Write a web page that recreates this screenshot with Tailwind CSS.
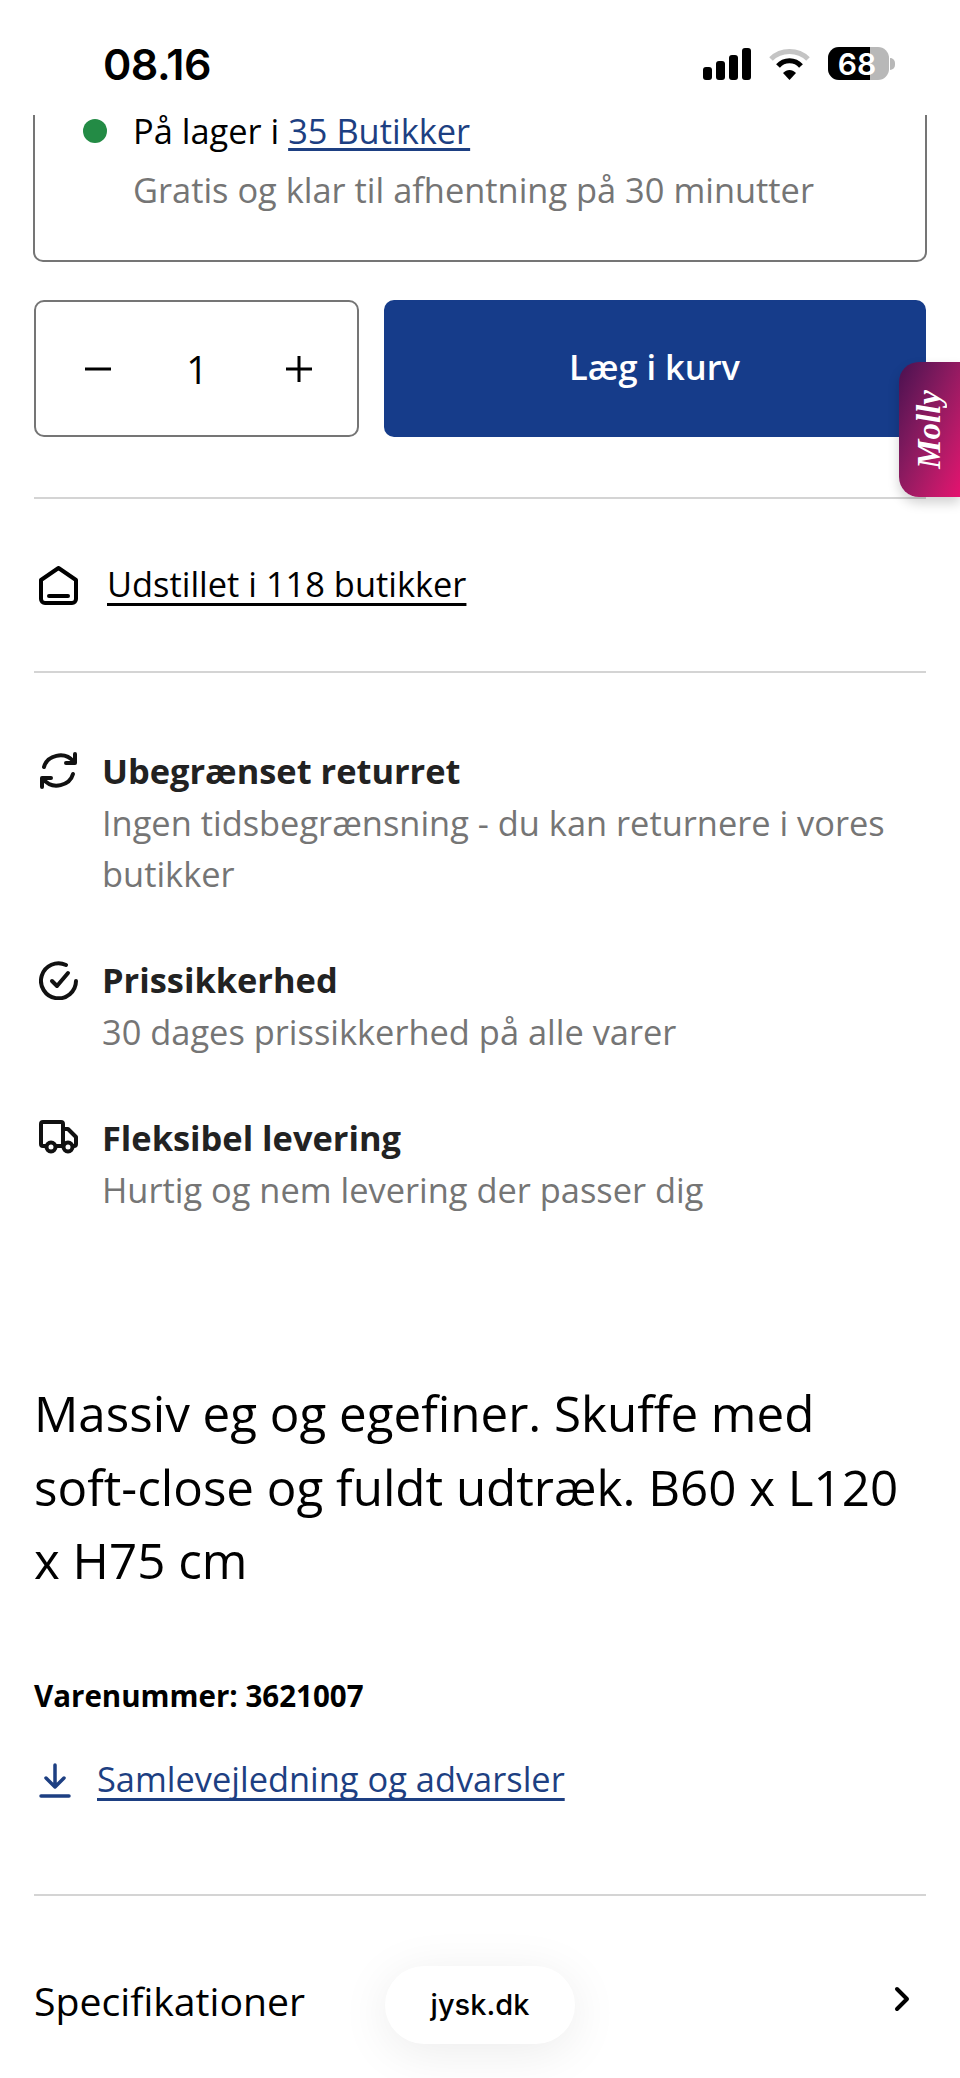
<!DOCTYPE html>
<html lang="da">
  <head>
    <meta charset="UTF-8" />
    <meta name="viewport" content="width=device-width, initial-scale=1.0" />
    <title>JYSK</title>
    <script src="https://cdn.jsdelivr.net/npm/@tailwindcss/browser@4"></script>
  </head>
  <body class="bg-white">
    <div class="relative w-[960px] h-[2078px] overflow-hidden bg-white font-['Open_Sans',sans-serif] text-black">
      <!-- status bar, page scrolls under it -->
      <div class="absolute top-0 left-0 z-10 w-full h-[115px] bg-white flex items-start justify-between pl-[103px] pr-[65px] pt-[47px]">
        <div class="font-['Inter',sans-serif] font-semibold text-[43px] leading-[34px] tracking-[-0.5px]">08.16</div>
        <div class="flex items-center gap-[18px] mt-0">
          <svg width="48" height="33" viewBox="0 0 48 33" fill="#000">
            <rect x="0" y="20" width="9" height="13" rx="3" />
            <rect x="13" y="14" width="9" height="19" rx="3" />
            <rect x="26" y="8" width="9" height="25" rx="3" />
            <rect x="39" y="1" width="9" height="32" rx="3" />
          </svg>
          <svg width="41" height="32" viewBox="0 0 41 32" fill="none">
            <path d="M2 11 C12 1 29 1 39 11" stroke="#c4c4c4" stroke-width="5" />
            <path d="M9 18 C15 11 26 11 32 18" stroke="#000" stroke-width="5" />
            <path d="M14 25 L20.5 32 L27 25 C23 21 18 21 14 25 Z" fill="#000" />
          </svg>
          <div class="flex items-center">
            <div class="relative w-[61px] h-[33px] rounded-[11px] overflow-hidden bg-[#b8b8b8]">
              <div class="absolute left-0 top-0 h-full w-[42px] bg-black"></div>
              <div class="absolute inset-0 flex items-center justify-center font-['Inter',sans-serif] font-semibold text-[30px] leading-none text-white pr-[3px]">68</div>
            </div>
            <div class="w-[5px] h-[12px] ml-[1px] rounded-r-full bg-[#b8b8b8]"></div>
          </div>
        </div>
      </div>

      <main class="pt-[100px]">
        <!-- stock card -->
        <div class="mx-[33px] h-[162px] border-2 border-t-0 border-[#757575] rounded-b-[10px] pt-[9px] pl-[48px]">
          <div class="flex items-center gap-[26px] text-[34.4px] leading-[44px]">
            <span class="w-[24px] h-[24px] rounded-full bg-[#238b45]"></span>
            <span>På lager i <a class="text-[#1d3f82] underline underline-offset-4">35 Butikker</a></span>
          </div>
          <div class="mt-[15px] pl-[50px] text-[34.4px] leading-[44px] text-[#757575]">Gratis og klar til afhentning på 30 minutter</div>
        </div>

        <div class="px-[34px]">
          <!-- quantity + add to cart -->
          <div class="mt-[38px] flex gap-[25px] h-[137px]">
            <div class="w-[325px] border-2 border-[#757575] rounded-[10px] flex items-center justify-between pl-[48px] pr-[44px]">
              <svg width="28" height="28" viewBox="0 0 28 28" stroke="#000" stroke-width="3"><path d="M1 14H27" /></svg>
              <span class="text-[38px] leading-none -ml-[3px]">1</span>
              <svg width="28" height="28" viewBox="0 0 28 28" stroke="#000" stroke-width="3"><path d="M1 14H27M14 1V27" /></svg>
            </div>
            <button class="flex-1 rounded-[10px] bg-[#163c8a] text-white font-semibold text-[34.5px] flex items-center justify-center pb-[3px] pr-[1px]">Læg i kurv</button>
          </div>

          <div class="mt-[60px] border-t-2 border-[#d4d4d4]"></div>

          <!-- shown in stores -->
          <div class="h-[172px] flex items-center gap-[29px] pl-[5px]">
            <svg width="39" height="39" viewBox="0 0 39 39" fill="none" stroke="#000" stroke-width="4" stroke-linejoin="round" stroke-linecap="round">
              <path d="M2 14 L19.5 2 L37 14 V33 a4 4 0 0 1 -4 4 H6 a4 4 0 0 1 -4 -4 Z" />
              <path d="M10 30 H29" />
            </svg>
            <a class="text-[34.4px] leading-[44px] underline underline-offset-[6px] [text-decoration-skip-ink:none] -mt-[2px]">Udstillet i 118 butikker</a>
          </div>

          <div class="border-t-2 border-[#d4d4d4]"></div>

          <!-- usps -->
          <div class="pt-[72px] flex flex-col gap-[55px]">
            <div class="flex gap-[29px]">
              <svg class="w-[39px] h-[39px] mt-[6px] shrink-0 ml-[5px] -mr-[5px]" viewBox="0 0 39 39" fill="none" stroke="#111" stroke-width="4" stroke-linecap="round" stroke-linejoin="round">
                <path d="M5 16 C8 5 25 -1 35 11" />
                <path d="M36 3 V12 H27" />
                <path d="M34 23 C31 34 14 40 4 28" />
                <path d="M3 36 V27 H12" />
              </svg>
              <div>
                <div class="text-[34.4px] leading-[52px] font-bold text-[#222]">Ubegrænset returret</div>
                <div class="text-[34.4px] leading-[51px] text-[#757575]">Ingen tidsbegrænsning - du kan returnere i vores<br />butikker</div>
              </div>
            </div>
            <div class="flex gap-[29px]">
              <svg class="w-[39px] h-[39px] mt-[7px] shrink-0 ml-[5px] -mr-[5px]" viewBox="0 0 39 39" fill="none" stroke="#111" stroke-width="4" stroke-linecap="round" stroke-linejoin="round">
                <path d="M37 20 A17.5 17.5 0 1 1 27 4" />
                <path d="M13 20 L18 25 L29 12" />
              </svg>
              <div>
                <div class="text-[34.4px] leading-[52px] font-bold text-[#222]">Prissikkerhed</div>
                <div class="text-[34.4px] leading-[51px] text-[#757575]">30 dages prissikkerhed på alle varer</div>
              </div>
            </div>
            <div class="flex gap-[29px]">
              <svg class="w-[39px] h-[39px] mt-[6px] shrink-0 ml-[5px] -mr-[5px]" viewBox="0 0 39 39" fill="none" stroke="#111" stroke-width="4" stroke-linecap="round" stroke-linejoin="round">
                <path d="M7 28 H4 a2 2 0 0 1 -2 -2 V6 a2 2 0 0 1 2 -2 H22 a2 2 0 0 1 2 2 V28 H17" />
                <path d="M24 11 H29 L37 19 V26 a2 2 0 0 1 -2 2 H34" />
                <circle cx="12" cy="29" r="4.5" />
                <circle cx="29" cy="29" r="4.5" />
              </svg>
              <div>
                <div class="text-[34.4px] leading-[52px] font-bold text-[#222]">Fleksibel levering</div>
                <div class="text-[34.4px] leading-[51px] text-[#757575]">Hurtig og nem levering der passer dig</div>
              </div>
            </div>
          </div>

          <!-- description -->
          <p class="mt-[161px] text-[49.3px] leading-[73.5px] w-[892px]">Massiv eg og egefiner. Skuffe med<br />soft-close og fuldt udtræk. B60 x L120<br />x H75 cm</p>

          <div class="mt-[79px] font-bold text-[29.5px] leading-[40px]">Varenummer: 3621007</div>

          <div class="mt-[41px] flex items-center gap-[26px]">
            <svg class="ml-[5px] mt-[4px]" width="32" height="36" viewBox="0 0 32 36" fill="none" stroke="#1d3f82" stroke-width="3.5" stroke-linecap="round" stroke-linejoin="round">
              <path d="M16 2 V24 M7 15 L16 24 L25 15" />
              <path d="M2 33 H30" />
            </svg>
            <a class="text-[34.4px] leading-[44px] text-[#1d3f82] underline underline-offset-[6px] [text-decoration-skip-ink:none]">Samlevejledning og advarsler</a>
          </div>

          <div class="mt-[93px] border-t-2 border-[#d4d4d4]"></div>

          <div class="pt-[79px] flex items-center justify-between pr-[16px]">
            <span class="text-[39.2px] leading-[52px]">Specifikationer</span>
            <svg class="mb-[4px]" width="16" height="26" viewBox="0 0 16 26" fill="none" stroke="#000" stroke-width="4" stroke-linecap="round" stroke-linejoin="round"><path d="M3 3 L13 13 L3 23" /></svg>
          </div>
        </div>
      </main>

      <!-- chat tab -->
      <div class="absolute right-0 top-[362px] w-[61px] h-[135px] rounded-l-[20px] bg-gradient-to-br from-[#4a1050] to-[#e5116f] shadow-[0_6px_12px_rgba(0,0,0,0.18)] flex items-center justify-center">
        <span class="[writing-mode:vertical-rl] rotate-180 font-['Liberation_Serif',serif] italic font-bold text-[33px] leading-none text-white">Molly</span>
      </div>

      <!-- browser url pill -->
      <div class="absolute left-[385px] top-[1966px] w-[190px] h-[78px] rounded-full bg-white shadow-[0_8px_50px_rgba(0,0,0,0.08)] flex items-center justify-center font-['Inter',sans-serif] font-medium text-[29px] text-black">jysk.dk</div>
    </div>
  </body>
</html>
